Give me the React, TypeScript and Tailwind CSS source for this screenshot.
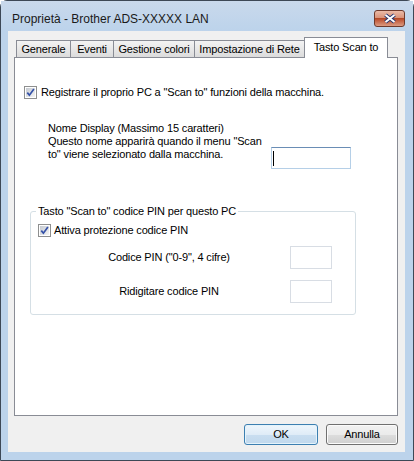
import React from 'react';

// Win7 style checkbox, checked
function CheckBox() {
  return (
    <span className="flex h-[13px] w-[13px] shrink-0 items-center justify-center border border-[#8e8f8f] bg-white">
      <span className="flex h-[9px] w-[9px] items-center justify-center bg-linear-to-br from-[#c5cad1] to-[#f4f4f4]">
        <svg width="9" height="9" viewBox="0 0 9 9">
          <path d="M1.3 4.6 L3.4 7.2 L7.9 1" fill="none" stroke="#3451a8" strokeWidth="1.7" />
        </svg>
      </span>
    </span>
  );
}

const tabs = [
  { label: 'Generale', w: 'w-[55px]' },
  { label: 'Eventi', w: 'w-[44px]' },
  { label: 'Gestione colori', w: 'w-[82px]' },
  { label: 'Impostazione di Rete', w: 'w-[111px]' },
];

export default function App() {
  return (
    <div className="flex h-[461px] w-[414px] flex-col rounded-t-[7px] border border-[#3d4856] bg-[#bcd3eb] font-['Liberation_Sans',Arial,sans-serif] text-[11px] text-black">
      {/* Title bar */}
      <div className="flex h-[30px] shrink-0 items-start justify-between bg-linear-to-b from-[#c9d9ec] to-[#bcd3eb] pl-[11px] pr-[8px]">
        <span className="mt-[10px] text-[12px] leading-[16px] text-[#1a1a1a]">Proprietà - Brother ADS-XXXXX LAN</span>
        <button className="mt-[9px] flex h-[17px] w-[31px] items-center justify-center rounded-[3px] border border-[#6e3a2c] bg-[linear-gradient(#ebbba8_0%,#d9937a_45%,#b44a28_50%,#c0593a_60%,#dc9b82_100%)]">
          <svg width="14" height="11" viewBox="0 0 14 11">
            <path d="M2.5 2 L11.5 9 M11.5 2 L2.5 9" stroke="#26356e" strokeWidth="4" />
            <path d="M2.5 2 L11.5 9 M11.5 2 L2.5 9" stroke="#ffffff" strokeWidth="2" />
          </svg>
        </button>
      </div>

      {/* Client area */}
      <div className="mx-[7px] h-[421px] w-[397px] bg-[#f0f0f0] px-[6px] pt-[6px] tracking-[-0.15px]">
        {/* Tabs */}
        <div className="flex h-[20px] items-end pl-[2px]">
          {tabs.map((t, i) => (
            <div
              key={t.label}
              className={`flex h-[17px] items-center justify-center border border-b-0 border-[#898c95] bg-linear-to-b from-[#f3f3f3] to-[#dcdcdc] ${t.w} ${i > 0 ? '-ml-px' : ''}`}
            >
              {t.label}
            </div>
          ))}
          <div className="relative z-10 -mb-px -ml-px flex h-[21px] w-[84px] items-center justify-center border border-b-0 border-[#898c95] bg-white pb-[1px]">
            Tasto Scan to
          </div>
        </div>

        {/* Tab panel */}
        <div className="h-[359px] w-[384px] border border-[#898c95] bg-white pl-[9px] pt-[28px]">
          <div className="flex h-[13px] items-center gap-[4px] leading-[13px]">
            <CheckBox />
            <span>Registrare il proprio PC a "Scan to" funzioni della macchina.</span>
          </div>

          <div className="mt-[23px] flex items-start pl-[24px]">
            <p className="w-[223px] leading-[13px]">
              Nome Display (Massimo 15 caratteri)
              <br />
              Questo nome apparirà quando il menu "Scan
              <br />
              to" viene selezionato dalla macchina.
            </p>
            <div className="mt-[25px] flex h-[22px] w-[80px] items-center border border-[#b5cfe7] border-t-[#6a8db5] bg-white pl-[1px]">
              <span className="h-[15px] w-px bg-black" />
            </div>
          </div>

          <fieldset className="mt-[36px] ml-[6px] w-[326px] rounded-[3px] border border-[#d5dfe5] pb-[11px]">
            <legend className="ml-[5px] px-[2px] leading-[12px]">Tasto "Scan to" codice PIN per questo PC</legend>
            <div className="mt-[7px] flex h-[13px] items-center gap-[3px] pl-[7px] leading-[13px]">
              <CheckBox />
              <span>Attiva protezione codice PIN</span>
            </div>
            <div className="mt-[9px] flex items-center pl-[29px]">
              <span className="w-[218px] text-center">Codice PIN ("0-9", 4 cifre)</span>
              <div className="ml-[12px] h-[23px] w-[42px] border border-[#d8dde4] bg-white" />
            </div>
            <div className="mt-[11px] flex items-center pl-[29px]">
              <span className="w-[218px] text-center">Ridigitare codice PIN</span>
              <div className="ml-[12px] h-[23px] w-[42px] border border-[#d8dde4] bg-white" />
            </div>
          </fieldset>
        </div>

        {/* Buttons */}
        <div className="mt-[8px] flex w-[384px] justify-end gap-[8px]">
          <button className="flex h-[21px] w-[74px] items-center justify-center rounded-[3px] border border-[#3c7fb1] bg-[linear-gradient(#eef6fc_0%,#dfecf7_50%,#c9def0_51%,#c0d8ed_100%)] shadow-[inset_0_0_0_1px_#e4f3fb]">
            OK
          </button>
          <button className="flex h-[21px] w-[72px] items-center justify-center rounded-[3px] border border-[#707070] bg-[linear-gradient(#f2f2f2_0%,#ebebeb_50%,#dddddd_51%,#cfcfcf_100%)] shadow-[inset_0_0_0_1px_#fbfbfb]">
            Annulla
          </button>
        </div>
      </div>
    </div>
  );
}
